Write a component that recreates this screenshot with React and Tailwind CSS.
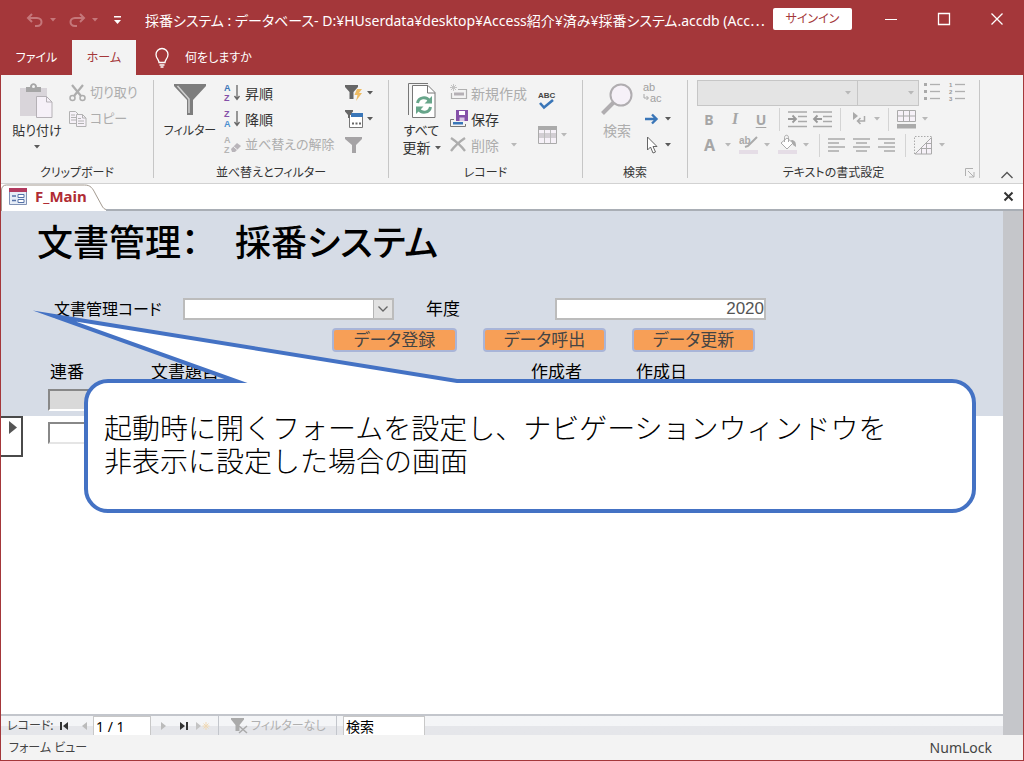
import { useState } from 'react';
import clsx from 'clsx';

// ---- small shared pieces ----

function Caret({ muted, className }) {
    return (
        <svg viewBox="0 0 6 4" className={clsx('w-1.5 h-1 shrink-0', muted ? 'fill-[#b8b8b8]' : 'fill-[#5a5a5a]', className)}>
            <path d="M0 0h6L3 3.5z" />
        </svg>
    );
}

function Icon({ w = 18, h = 18, children }) {
    return (
        <svg width={w} height={h} viewBox={`0 0 ${w} ${h}`} fill="none" className="shrink-0 overflow-visible font-['Liberation_Sans',sans-serif]" aria-hidden="true">
            {children}
        </svg>
    );
}

function Group({ label, width, launcher, children }) {
    return (
        <section aria-label={label} className={clsx('relative flex flex-col shrink-0 h-[98px] border-r border-[#c6c6c6]', width)}>
            <div className="flex h-[87px] shrink-0 items-start">{children}</div>
            <div className="shrink-0 text-center text-[12px] leading-3 text-[#333]">{label}</div>
            {launcher}
        </section>
    );
}

function RibbonButton({ icon, label, disabled, caret, small }) {
    return (
        <button
            type="button"
            disabled={disabled}
            className={clsx(
                'flex items-center h-[26px] whitespace-nowrap',
                small ? 'text-[13px]' : 'text-[14px]',
                disabled ? 'text-[#adadad]' : 'text-[#333]'
            )}
        >
            <span className="w-[21px] flex">{icon}</span>
            {label}
            {caret && <Caret muted={disabled} className={label ? 'ml-3' : 'ml-px'} />}
        </button>
    );
}

function BigButton({ icon, label, disabled, className, children }) {
    return (
        <button
            type="button"
            aria-label={label}
            disabled={disabled}
            className={clsx('flex flex-col items-center shrink-0 pt-[3px] leading-[17px] whitespace-nowrap', className, disabled ? 'text-[#adadad]' : 'text-[#333]')}
        >
            <span className="h-9 mb-[3px]">{icon}</span>
            {children}
        </button>
    );
}

function Separator() {
    return <span className="w-px h-[23px] bg-[#d4d4d4] shrink-0" />;
}

// ---- ribbon icons ----

const PasteIcon = () => (
    <Icon w={34} h={36}>
        <path d="M0 5h27v28H0z" fill="#d9d5da" />
        <path d="M6 9V4h4c0-5 7-5 7 0h4v5z" fill="#a6a6a6" />
        <circle cx="13.500" cy="3.500" r="1.500" fill="#f3f3f3" />
        <path d="M16.500 13.500h10l5.500 5.500v15.500H16.500z" fill="#f6f1f8" stroke="#b5b1b6" />
        <path d="M26.500 13.500V19H32" stroke="#b5b1b6" />
    </Icon>
);

const CutIcon = () => (
    <Icon>
        <path d="M3 1l9 11M14 1L5 12" stroke="#adadad" strokeWidth="2.200" />
        <circle cx="3.500" cy="14" r="2.500" stroke="#adadad" strokeWidth="1.500" />
        <circle cx="13.500" cy="14" r="2.500" stroke="#adadad" strokeWidth="1.500" />
    </Icon>
);

const CopyIcon = () => (
    <Icon>
        <path d="M.5 1.500h6l3 3v9h-9z" fill="#f6f1f8" stroke="#b2b2b2" />
        <path d="M2 5h4M2 7.500h5M2 10h5" stroke="#b2b2b2" />
        <path d="M7.500 4.500h6l3.500 3.500v8.500H7.500z" fill="#f6f1f8" stroke="#b2b2b2" />
        <path d="M13.500 4.500V8H17M9 8.500h3M9 11h6M9 13.500h6" stroke="#b2b2b2" />
    </Icon>
);

const FunnelIcon = () => (
    <Icon w={32} h={34}>
        <path d="M0 1h32v2L19 17v15h-6V17L0 3z" fill="#7d7d7d" />
        <path d="M3.500 3L15 16v14" stroke="#d0d0d0" strokeWidth="1.500" />
    </Icon>
);

function SortIcon({ top, bottom, topClass, bottomClass }) {
    return (
        <Icon h={20}>
            <text x="0" y="8" className={clsx('text-[9px] font-bold', topClass)}>{top}</text>
            <text x="0" y="18" className={clsx('text-[9px] font-bold', bottomClass)}>{bottom}</text>
            <path d="M13 2v14M10.500 13l2.500 3.500 2.500-3.500" stroke="#666" strokeWidth="1.300" />
        </Icon>
    );
}

const ClearSortIcon = () => (
    <Icon h={20}>
        <text x="0" y="8" className="text-[9px] font-bold fill-[#b5b5b5]">A</text>
        <text x="0" y="18" className="text-[9px] font-bold fill-[#b5b5b5]">Z</text>
        <path d="M7 14l6-6 4 3-6 6H8z" fill="#b9b5ba" />
        <path d="M9.500 11.500l4 3.500" stroke="#f3f3f3" />
    </Icon>
);

const SelectionFilterIcon = () => (
    <Icon>
        <path d="M0 1h13v2L8.500 8v7h-4V8L0 3z" fill="#666" />
        <path d="M12 5h5l-3 4h3l-6 8 1.500-6H9.500z" fill="#eebb62" />
    </Icon>
);

const AdvancedFilterIcon = () => (
    <Icon>
        <path d="M4.500 4.500h13v13h-13z" fill="#fff" stroke="#777" />
        <path d="M6 3h12v4H6z" fill="#3a76b8" />
        <path d="M0 0h8v1.500L5 5v3H3V5L0 1.500z" fill="#666" />
        <path d="M7 13.500h2M10.500 13.500h2M14 13.500h2" stroke="#666" strokeWidth="2" />
    </Icon>
);

const ToggleFilterIcon = () => (
    <Icon>
        <path d="M0 1h17v2l-6 6v8H7V9L0 3z" fill="#a5a3a5" />
    </Icon>
);

const RefreshAllIcon = () => (
    <Icon w={28} h={36}>
        <path d="M.5 32V.5H20" stroke="#777" />
        <path d="M4.500 2.500H20l7 7v25H4.500z" fill="#fff" stroke="#777" />
        <path d="M19.500 2.500V10H27" stroke="#777" />
        <path d="M9.500 20c1-6 9-7 12-2M22.500 24c-1 6-9 7-12 2" stroke="#67a58a" strokeWidth="3" />
        <path d="M24 13v7.500h-7.500zM8 31v-7.500h7.500z" fill="#67a58a" />
    </Icon>
);

const NewRecordIcon = () => (
    <Icon>
        <path d="M3.500 0v7M0 3.500h7M1 1l5 5M6 1L1 6" stroke="#c4c4c4" />
        <path d="M8 5.500h8.500v9h-15V9" stroke="#b0b0b0" strokeWidth="1.200" />
        <path d="M4 8.500h10v3H4z" fill="#b5b0b5" />
    </Icon>
);

const SaveIcon = () => (
    <Icon>
        <path d="M4 9.500H.5v7h15V14" stroke="#777" />
        <path d="M3 12h10v2.500H3z" fill="#3a76b8" />
        <path d="M6 0h12v11H6z" fill="#8450a8" />
        <path d="M9 1h6v4H9z" fill="#fff" />
        <path d="M9.500 7.500h5V11h-5z" fill="#d8c5e4" />
    </Icon>
);

const DeleteIcon = () => (
    <Icon>
        <path d="M1 2c6 4 11 9 14 13M15 2C9 6 4 11 1 15" stroke="#adadad" strokeWidth="2.300" />
    </Icon>
);

const SpellingIcon = () => (
    <Icon w={18} h={20}>
        <text x="0" y="8" className="text-[8px] font-bold fill-[#444]">ABC</text>
        <path d="M2 13l4 4.500L15 10" stroke="#3a76b8" strokeWidth="2.600" />
    </Icon>
);

const MoreIcon = () => (
    <Icon w={19} h={18}>
        <path d="M.5.5h18v17H.5z" fill="#f6f1f8" stroke="#aaa" />
        <path d="M0 0h19v4H0z" fill="#aaa" />
        <path d="M1 7h17v5H1z" fill="#d2ced3" />
        <path d="M6.500 4v13M12.500 4v13" stroke="#bbb" />
    </Icon>
);

const FindIcon = () => (
    <Icon w={32} h={34}>
        <path d="M13 19L1.500 30.500" stroke="#b0adb0" strokeWidth="4" />
        <circle cx="20" cy="12" r="10.500" fill="#f6f1f8" stroke="#b0adb0" strokeWidth="2" />
    </Icon>
);

const ReplaceIcon = () => (
    <Icon w={20} h={22}>
        <text x="0" y="9" className="text-[11px] fill-[#a0a0a0]">ab</text>
        <text x="7" y="20" className="text-[11px] fill-[#a0a0a0]">ac</text>
        <path d="M1 12v4h4M3.500 14l2 2-2 2" stroke="#a8a8a8" />
    </Icon>
);

const GoToIcon = () => (
    <Icon>
        <path d="M2 9h11M9 4.500L13.500 9 9 13.500" stroke="#3a76b8" strokeWidth="2.400" />
    </Icon>
);

const SelectIcon = () => (
    <Icon>
        <path d="M4.500 1v13l3-3 2.500 6 2.500-1-2.500-5.500h4z" fill="#fff" stroke="#666" />
    </Icon>
);

function ListIcon({ numbered }) {
    return (
        <Icon w={17} h={20}>
            {[2, 9, 16].map((y, i) => (
                <g key={y}>
                    {numbered ? (
                        <text x="0" y={y + 3} className="text-[6px] font-bold fill-[#999]">{i + 1}</text>
                    ) : (
                        <path d={`M0 ${y - 1}h3v3H0z`} fill="#aaa" />
                    )}
                    <path d={`M6 ${y + 0.5}h10`} stroke="#b0b0b0" strokeWidth="1.300" />
                </g>
            ))}
        </Icon>
    );
}

function IndentIcon({ outdent }) {
    return (
        <Icon w={19} h={17}>
            <path d="M0 1h19M10 5.500h9M10 10.500h9M0 15.500h19" stroke="#aaa" strokeWidth="1.300" />
            <path d={outdent ? 'M9 8H1.500M4.500 4.500L1 8l3.500 3.500' : 'M0 8h7.500M4.500 4.500L8 8l-3.500 3.500'} stroke="#999" strokeWidth="1.800" />
        </Icon>
    );
}

const DirectionIcon = () => (
    <Icon w={14} h={16}>
        <path d="M1 1l5 4-5 4z" fill="#aaa" />
        <path d="M12.500 5v5H6M8.500 7L5.500 10l3 3" stroke="#aaa" strokeWidth="1.500" />
    </Icon>
);

const GridlinesIcon = () => (
    <Icon w={19} h={19}>
        <path d="M.5.5h18v11H.5zM6.500 0v12M12.500 0v12M0 6h19" fill="#f6f1f8" stroke="#aaa" />
        <path d="M0 14h19v4.500H0z" fill="#aaa" />
    </Icon>
);

const HighlightIcon = () => (
    <Icon w={19} h={20}>
        <text x="0" y="9" className="text-[10px] font-bold fill-[#aaa]">ab</text>
        <path d="M18 2L9 11l-3 1" stroke="#aaa" strokeWidth="2" />
        <path d="M0 15h19v4H0z" fill="#e5dde6" />
    </Icon>
);

const FillIcon = () => (
    <Icon w={19} h={20}>
        <path d="M3 8l6-5 6 5-6 6z" fill="#fff" stroke="#aaa" />
        <path d="M6.500 7V2.500c0-3 4-3 4 0V7" stroke="#aaa" />
        <path d="M13 5c4 0 5 2 5 7l-3-2z" fill="#aaa" />
        <path d="M0 15h19v4H0z" fill="#e5dde6" />
    </Icon>
);

const alignPaths = {
    left: 'M0 1h17M0 5h11M0 9h17M0 13h11',
    center: 'M0 1h17M3 5h11M0 9h17M3 13h11',
    right: 'M0 1h17M6 5h11M0 9h17M6 13h11',
};

function AlignIcon({ side }) {
    return (
        <Icon w={17} h={14}>
            <path d={alignPaths[side]} stroke="#aaa" strokeWidth="1.300" />
        </Icon>
    );
}

const AltRowIcon = () => (
    <Icon w={19} h={19}>
        <path d="M.5 18V.5h17" stroke="#aaa" strokeDasharray="1.500 1.500" />
        <path d="M17.500 1.500v16.500H1z" fill="#f6f1f8" stroke="#aaa" />
        <path d="M12.500 7v11M7.500 12v6M7 12.500h10M12 7.500h6" stroke="#aaa" />
    </Icon>
);

// ---- window parts ----

function TitleBar() {
    return (
        <header className="h-10 flex items-center text-white">
            <div className="flex items-center w-[144px] shrink-0 pl-[25px]">
                <button type="button" aria-label="元に戻す" disabled className="flex items-center gap-1.5">
                    <Icon w={18} h={14}>
                        <path d="M6 1L2 5l4 4M2 5h9c6 0 6 8 0 8h-2" stroke="#c5777a" strokeWidth="2" />
                    </Icon>
                    <svg viewBox="0 0 6 4" className="w-1.5 h-1 fill-[#c5777a]"><path d="M0 0h6L3 3.500z" /></svg>
                </button>
                <button type="button" aria-label="やり直し" disabled className="flex items-center gap-1.5 ml-3">
                    <Icon w={18} h={14}>
                        <path d="M12 1l4 4-4 4M16 5H7c-6 0-6 8 0 8h2" stroke="#c5777a" strokeWidth="2" />
                    </Icon>
                    <svg viewBox="0 0 6 4" className="w-1.5 h-1 fill-[#c5777a]"><path d="M0 0h6L3 3.500z" /></svg>
                </button>
                <button type="button" aria-label="クイック アクセス ツール バーのカスタマイズ" className="ml-4">
                    <svg viewBox="0 0 7 8" className="w-[7px] h-2 fill-white"><path d="M0 0h7v1.500H0zM0 4h7L3.500 8z" /></svg>
                </button>
            </div>
            <h1 className="flex-1 min-w-0 overflow-hidden whitespace-nowrap text-[14px]">
                採番システム : データベース- D:¥HUserdata¥desktop¥Access紹介¥済み¥採番システム.accdb (Acc⋯
            </h1>
            <button type="button" className="shrink-0 w-[79px] h-[22px] ml-0.5 mr-3 mb-0.5 rounded-[2px] bg-white text-[#a4373a] text-[12px] leading-[22px]">
                サインイン
            </button>
            <button type="button" aria-label="最小化" className="w-[53px] h-full flex items-center justify-center shrink-0 pb-0.5">
                <Icon w={12} h={12}><path d="M0 6.500h12" stroke="#fff" /></Icon>
            </button>
            <button type="button" aria-label="最大化" className="w-[53px] h-full flex items-center justify-center shrink-0 pb-0.5">
                <Icon w={12} h={12}><path d="M.5.5h11v11H.5z" stroke="#fff" strokeWidth="1.300" /></Icon>
            </button>
            <button type="button" aria-label="閉じる" className="w-[53px] h-full flex items-center justify-center shrink-0 pb-0.5">
                <Icon w={12} h={12}><path d="M.5.5l11 11M11.500.5l-11 11" stroke="#fff" strokeWidth="1.300" /></Icon>
            </button>
        </header>
    );
}

function RibbonTabs() {
    return (
        <nav className="h-[35px] flex text-white text-[12px]">
            <button type="button" className="w-[71px] shrink-0">ファイル</button>
            <button type="button" className="w-16 shrink-0 bg-[#f3f3f3] text-[#a4373a]">ホーム</button>
            <button type="button" className="flex items-center gap-4 ml-[19px] shrink-0">
                <Icon w={14} h={20}>
                    <path d="M4 14.500c0-3-3-4-3-8a6 6 0 0112 0c0 4-3 5-3 8zM4.500 17h5M5.500 19h3" stroke="#fff" strokeWidth="1.300" />
                </Icon>
                何をしますか
            </button>
        </nav>
    );
}

function Ribbon() {
    return (
        <div className="h-[109px] flex items-start pt-[5px] bg-[#f3f3f3] border-b border-[#d2d2d2] text-[14px]">
            <Group label="クリップボード" width="w-[153px]">
                <div className="w-[68px] pl-1 flex justify-center shrink-0">
                    <BigButton label="貼り付け" className="text-[13px]" icon={<PasteIcon />}>
                        貼り付け
                        <Caret className="mt-1.5" />
                    </BigButton>
                </div>
                <div>
                    <RibbonButton small disabled icon={<CutIcon />} label="切り取り" />
                    <RibbonButton small disabled icon={<CopyIcon />} label="コピー" />
                </div>
            </Group>

            <Group label="並べ替えとフィルター" width="w-[235px]">
                <div className="w-[70px] pl-0.5 flex justify-center shrink-0">
                    <BigButton label="フィルター" className="text-[12px]" icon={<FunnelIcon />}>フィルター</BigButton>
                </div>
                <div className="w-[121px] shrink-0">
                    <RibbonButton icon={<SortIcon top="A" bottom="Z" topClass="fill-[#3a76b8]" bottomClass="fill-[#8450a8]" />} label="昇順" />
                    <RibbonButton icon={<SortIcon top="Z" bottom="A" topClass="fill-[#8450a8]" bottomClass="fill-[#4a8fd0]" />} label="降順" />
                    <RibbonButton small disabled icon={<ClearSortIcon />} label="並べ替えの解除" />
                </div>
                <div>
                    <RibbonButton icon={<SelectionFilterIcon />} caret />
                    <RibbonButton icon={<AdvancedFilterIcon />} caret />
                    <RibbonButton disabled icon={<ToggleFilterIcon />} />
                </div>
            </Group>

            <Group label="レコード" width="w-[194px]">
                <div className="w-[61px] pl-1 flex justify-center shrink-0">
                    <BigButton label="すべて更新" icon={<RefreshAllIcon />}>
                        <span className="text-[13px]">すべて</span>
                        <span className="flex items-center gap-1 text-[14px]">更新<Caret /></span>
                    </BigButton>
                </div>
                <div className="w-[88px] shrink-0">
                    <RibbonButton disabled icon={<NewRecordIcon />} label="新規作成" />
                    <RibbonButton icon={<SaveIcon />} label="保存" />
                    <RibbonButton disabled icon={<DeleteIcon />} label="削除" caret />
                </div>
                <div className="flex flex-col items-start gap-4 pt-[10px]">
                    <button type="button" aria-label="スペル チェック"><SpellingIcon /></button>
                    <button type="button" aria-label="その他" disabled className="flex items-center gap-1"><MoreIcon /><Caret muted /></button>
                </div>
            </Group>

            <Group label="検索" width="w-[105px]">
                <div className="w-[60px] pl-2 flex justify-center shrink-0">
                    <BigButton label="検索" disabled icon={<FindIcon />}>検索</BigButton>
                </div>
                <div>
                    <RibbonButton disabled icon={<ReplaceIcon />} />
                    <RibbonButton icon={<GoToIcon />} caret />
                    <RibbonButton icon={<SelectIcon />} caret />
                </div>
            </Group>

            <Group
                label="テキストの書式設定"
                width="w-[292px]"
                launcher={
                    <button type="button" aria-label="書式設定の詳細" disabled className="absolute right-1 bottom-0">
                        <Icon w={10} h={10}><path d="M.5 8V.5H8M3 3l6 6M9 4v5H4" stroke="#b0b0b0" /></Icon>
                    </button>
                }
            >
                <div className="pl-[9px] text-[#a6a6a6]">
                    <div className="flex items-start">
                        <span className="flex items-center relative">
                            <select disabled aria-label="フォント" className="appearance-none w-[161px] h-[26px] bg-[#e4e4e4] border border-[#c6c6c6]" />
                            <Caret muted className="absolute right-[7px]" />
                        </span>
                        <span className="flex items-center relative">
                            <select disabled aria-label="フォント サイズ" className="appearance-none w-[61px] h-[26px] bg-[#e4e4e4] border border-l-0 border-[#c6c6c6]" />
                            <Caret muted className="absolute right-[5px]" />
                        </span>
                        <button type="button" aria-label="箇条書き" disabled className="ml-[5px] mt-0.5"><ListIcon /></button>
                        <button type="button" aria-label="段落番号" disabled className="ml-2 mt-0.5"><ListIcon numbered /></button>
                    </div>
                    <div className="flex items-center h-[26px]">
                        <button type="button" disabled className="w-6 font-bold">B</button>
                        <button type="button" disabled className="w-7 font-bold italic font-['Liberation_Serif',serif] text-[16px]">I</button>
                        <button type="button" disabled className="w-6 font-bold underline underline-offset-2 mr-1.5">U</button>
                        <Separator />
                        <button type="button" aria-label="インデント" disabled className="ml-2"><IndentIcon /></button>
                        <button type="button" aria-label="インデント解除" disabled className="ml-1.5 mr-2"><IndentIcon outdent /></button>
                        <Separator />
                        <button type="button" aria-label="文字列の方向" disabled className="flex items-center gap-2 ml-[11px] mr-2"><DirectionIcon /><Caret muted /></button>
                        <Separator />
                        <button type="button" aria-label="枠線" disabled className="flex items-center gap-1.5 ml-2"><GridlinesIcon /><Caret muted /></button>
                    </div>
                    <div className="flex items-center h-[26px]">
                        <button type="button" disabled className="flex items-center gap-2.5 pl-[7px] text-[16px] font-bold">A<Caret muted /></button>
                        <button type="button" aria-label="背景色" disabled className="flex items-center gap-1.5 ml-2"><HighlightIcon /><Caret muted /></button>
                        <button type="button" aria-label="塗りつぶし" disabled className="flex items-center gap-1.5 ml-2 mr-2.5"><FillIcon /><Caret muted /></button>
                        <Separator />
                        <button type="button" aria-label="左揃え" disabled className="ml-2"><AlignIcon side="left" /></button>
                        <button type="button" aria-label="中央揃え" disabled className="ml-2"><AlignIcon side="center" /></button>
                        <button type="button" aria-label="右揃え" disabled className="ml-2 mr-2.5"><AlignIcon side="right" /></button>
                        <Separator />
                        <button type="button" aria-label="交互の行の色" disabled className="flex items-center gap-1.5 ml-2"><AltRowIcon /><Caret muted /></button>
                    </div>
                </div>
            </Group>

            <button type="button" aria-label="リボンを折りたたむ" className="ml-auto mr-2.5 self-end mb-1">
                <Icon w={12} h={8}><path d="M.5 7L6 1.500 11.500 7" stroke="#555" strokeWidth="1.400" /></Icon>
            </button>
        </div>
    );
}

function DocumentTabs() {
    return (
        <div className="h-[27px] flex bg-white border-b-2 border-[#a9aeb5]">
            <div className="relative w-[105px] h-[27px] shrink-0">
                <svg viewBox="0 0 105 27" className="absolute inset-0 w-full h-full" fill="none" aria-hidden="true">
                    <path d="M.5 27V6c0-3 2-5 5-5h78c6 0 8 3 11 9l6 11c1.500 3 3 4.500 5 4.500V27z" fill="#fff" />
                    <path d="M.5 27V6c0-3 2-5 5-5h78c6 0 8 3 11 9l6 11c1.500 3 3 4.500 5 4.500" stroke="#a39a90" />
                </svg>
                <button type="button" className="relative flex items-center gap-2 h-full pl-2 pb-0.5 text-[15px] font-bold text-[#b02c34]">
                    <Icon w={18} h={17}>
                        <path d="M.5.5h17v16H.5z" fill="#e6edf7" stroke="#8092b5" />
                        <path d="M0 0h18v4H0z" fill="#b23a5e" />
                        <path d="M3 8h4M3 12.500h4" stroke="#5572a8" strokeWidth="1.500" />
                        <path d="M9 6.500h6v3H9zM9 11.500h6v3H9z" fill="#fff" stroke="#5572a8" />
                    </Icon>
                    F_Main
                </button>
            </div>
            <button type="button" aria-label="フォームを閉じる" className="ml-auto mr-2.5">
                <Icon w={9} h={9}><path d="M.5.5l8 8M8.500.5l-8 8" stroke="#333" strokeWidth="2" /></Icon>
            </button>
        </div>
    );
}

function ActionButton({ className, children }) {
    return (
        <button
            type="button"
            className={clsx('h-6 shrink-0 rounded-[4px] bg-[#f79f57] border-2 border-[#a9b5d8] text-[17px] leading-5 text-[#444]', className)}
        >
            {children}
        </button>
    );
}

function Callout() {
    return (
        <div className="absolute left-[83px] right-[27px] top-[168px] h-[134px] bg-white border-4 border-[#4472c4] rounded-[24px]">
            <svg width="460" height="80" viewBox="20 306 460 80" fill="none" className="absolute left-[-68px] top-[-77px]" aria-hidden="true">
                <path d="M54 316L236 381l6 3H457V381z" fill="#fff" />
                <path d="M200 381H236L54 316 457 381h20" stroke="#4472c4" strokeWidth="4" strokeMiterlimit="20" />
            </svg>
            <p className="pl-4 pt-7 text-[28px] leading-[33px] font-light text-black font-['Noto_Sans_CJK_JP',sans-serif] [font-feature-settings:normal]">
                起動時に開くフォームを設定し、ナビゲーションウィンドウを
                <br />
                非表示に設定した場合の画面
            </p>
        </div>
    );
}

function FormView() {
    const [year, setYear] = useState('2020');

    return (
        <main className="relative flex-1 flex flex-col bg-white text-[16px] text-black">
            <div className="h-[205px] bg-[#d6dce6]">
                <h2 className="pl-9 pt-1.5 h-[87px] text-[36px] leading-[52px] font-medium whitespace-pre">文書管理：　採番システム</h2>
                <div className="flex items-center h-[22px] pl-[53px]">
                    <label htmlFor="doc-code" className="w-[129px] shrink-0">文書管理コード</label>
                    <span className="relative w-[211px] h-[22px] shrink-0">
                        <select id="doc-code" className="appearance-none w-full h-full bg-white border-2 border-[#bcbcbc]" />
                        <span className="absolute right-0.5 top-0.5 bottom-0.5 w-[19px] flex items-center justify-center bg-[#e2e2e2] border-l border-[#b5b5b5] pointer-events-none">
                            <Icon w={10} h={6}><path d="M.5.5L5 5 9.500.5" stroke="#666" strokeWidth="1.300" /></Icon>
                        </span>
                    </span>
                    <label htmlFor="year" className="w-[129px] ml-8 shrink-0 text-[17px]">年度</label>
                    <input
                        id="year"
                        value={year}
                        onChange={(e) => setYear(e.target.value)}
                        className="w-[211px] h-[22px] shrink-0 bg-white border-2 border-[#bcbcbc] text-right text-[17px] text-[#555] font-['Liberation_Sans',sans-serif]"
                    />
                </div>
                <div className="flex pl-[331px] mt-2 gap-[26px]">
                    <ActionButton className="w-[125px]">データ登録</ActionButton>
                    <ActionButton className="w-[123px]">データ呼出</ActionButton>
                    <ActionButton className="w-[123px]">データ更新</ActionButton>
                </div>
                <div className="flex items-center h-10 pl-[49px] text-[17px] whitespace-nowrap">
                    <span className="w-[101px]">連番</span>
                    <span className="w-[380px]">文書題目</span>
                    <span className="w-[105px]">作成者</span>
                    <span>作成日</span>
                </div>
                <input aria-label="連番" readOnly className="block w-[90px] h-[22px] ml-[47px] mt-[-3px] bg-[#d9d9d9] border-2 border-t-[#888] border-l-[#888] border-b-white border-r-white" />
            </div>

            <div className="flex">
                <button type="button" aria-label="レコード セレクター" className="w-[22px] h-[41px] border-2 border-l-0 border-[#4a4a4a] flex justify-end pr-1 pt-[3px]">
                    <svg viewBox="0 0 8 13" className="w-2 h-[13px] fill-[#555]"><path d="M0 0l8 6.500L0 13z" /></svg>
                </button>
                <input aria-label="連番" className="w-[90px] h-[22px] ml-[25px] mt-1.5 bg-white border-2 border-t-[#888] border-l-[#888] border-b-[#e5e5e5] border-r-[#e5e5e5]" />
            </div>

            <Callout />
        </main>
    );
}

function RecordNavigation() {
    const [record, setRecord] = useState('1 / 1');
    const [search, setSearch] = useState('検索');

    return (
        <div className="h-[21px] flex items-center border-t-2 border-[#c3c6cc] bg-gradient-to-b from-[#f4f5f7] from-50% to-[#e5e6ea] to-50% text-[12px] text-[#444]">
            <label htmlFor="record" className="w-[59px] pl-1.5 shrink-0">レコード:</label>
            <button type="button" aria-label="先頭のレコード" className="w-[22px]">
                <Icon w={9} h={8}><path d="M0 0h2v8H0zM8 0v8L3 4z" fill="#333" /></Icon>
            </button>
            <button type="button" aria-label="前のレコード" className="w-[11px]">
                <Icon w={5} h={8}><path d="M5 0v8L0 4z" fill="#bbb" /></Icon>
            </button>
            <input
                id="record"
                value={record}
                onChange={(e) => setRecord(e.target.value)}
                className="w-[58px] h-full shrink-0 px-0.5 bg-white border border-b-0 border-[#c8c8c8] text-[14px] text-black"
            />
            <button type="button" aria-label="次のレコード" className="ml-[10px]">
                <Icon w={5} h={8}><path d="M0 0v8l5-4z" fill="#bbb" /></Icon>
            </button>
            <button type="button" aria-label="最後のレコード" className="ml-3.5">
                <Icon w={9} h={8}><path d="M6 0h2v8H6zM0 0v8l5-4z" fill="#333" /></Icon>
            </button>
            <button type="button" aria-label="新しいレコード" className="ml-[7px] mr-2">
                <Icon w={14} h={8}>
                    <path d="M0 0v8l5-4z" fill="#c4c4c4" />
                    <path d="M10 0v8M6.500 4h7M7.500 1.500l5 5M12.500 1.500l-5 5" stroke="#f0d9b5" />
                </Icon>
            </button>
            <span className="w-px h-full bg-[#c3c6cc] shrink-0" />
            <button type="button" disabled className="flex items-center gap-[3px] w-[117px] shrink-0 pl-3 text-[#b0b0b0] whitespace-nowrap">
                <Icon w={17} h={17}>
                    <path d="M0 1h13v1.500L8.500 8v6h-4V8L0 2.500z" fill="#aaa" />
                    <path d="M8 9l8 7M16 9l-8 7" stroke="#aaa" strokeWidth="1.500" />
                </Icon>
                フィルターなし
            </button>
            <span className="w-px h-full bg-[#c3c6cc] shrink-0" />
            <input
                aria-label="検索"
                value={search}
                onChange={(e) => setSearch(e.target.value)}
                className="w-[82px] h-full ml-1.5 shrink-0 px-0.5 bg-white border border-b-0 border-[#c8c8c8] text-[14px] text-black"
            />
        </div>
    );
}

export default function App() {
    return (
        <div className="min-h-screen flex flex-col bg-[#a4373a] px-px pb-px font-['Noto_Sans','Noto_Sans_CJK_JP',sans-serif] [font-feature-settings:'palt']">
            <TitleBar />
            <RibbonTabs />
            <Ribbon />
            <DocumentTabs />
            <div className="flex-1 flex bg-[#c5c6ca]">
                <div className="flex-1 flex flex-col min-w-0">
                    <FormView />
                    <RecordNavigation />
                </div>
                <div className="w-5 shrink-0" />
            </div>
            <footer className="h-[25px] flex items-center justify-between pl-2 pr-[31px] bg-[#f3f3f3] text-[#444]">
                <span className="text-[12px]">フォーム ビュー</span>
                <span className="text-[14px]">NumLock</span>
            </footer>
        </div>
    );
}
